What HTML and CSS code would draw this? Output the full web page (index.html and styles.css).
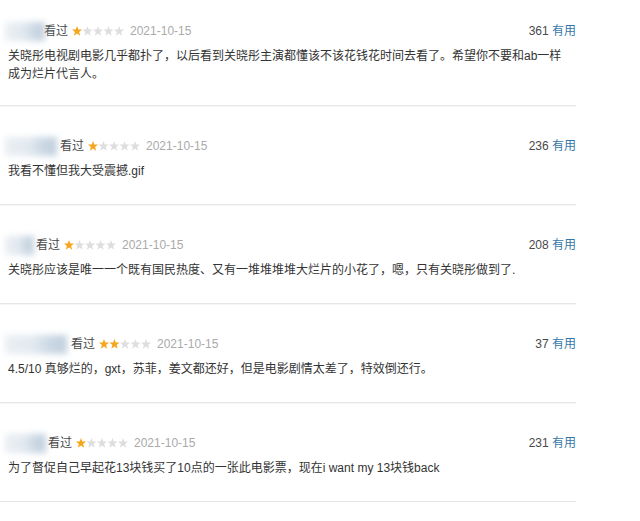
FILE: index.html
```html
<!DOCTYPE html>
<html lang="zh-CN">
<head>
<meta charset="utf-8">
<link rel="stylesheet" href="styles.css">
</head>
<body>
<svg width="0" height="0" class="defs">
  <defs>
    <polygon id="st" points="5,0 6.3,3.5 10,3.6 7.1,5.9 8.2,9.8 5,7.6 1.8,9.8 2.9,5.9 0,3.6 3.7,3.5"/>
  </defs>
</svg>
<div class="list">
  <div class="comment first">
    <div class="head">
      <span class="name n1"></span>
      <span class="watched">看过</span>
      <svg class="stars" viewBox="0 0 52 10" width="52" height="10"><use href="#st" x="0" class="on"/><use href="#st" x="10.5" class="off"/><use href="#st" x="21" class="off"/><use href="#st" x="31.5" class="off"/><use href="#st" x="42" class="off"/></svg>
      <span class="date">2021-10-15</span>
      <span class="votes">361 <a class="useful">有用</a></span>
    </div>
    <p class="text">关晓彤电视剧电影几乎都扑了，以后看到关晓彤主演都懂该不该花钱花时间去看了。希望你不要和ab一样成为烂片代言人。</p>
  </div>
  <div class="comment">
    <div class="head">
      <span class="name n2"></span>
      <span class="watched">看过</span>
      <svg class="stars" viewBox="0 0 52 10" width="52" height="10"><use href="#st" x="0" class="on"/><use href="#st" x="10.5" class="off"/><use href="#st" x="21" class="off"/><use href="#st" x="31.5" class="off"/><use href="#st" x="42" class="off"/></svg>
      <span class="date">2021-10-15</span>
      <span class="votes">236 <a class="useful">有用</a></span>
    </div>
    <p class="text">我看不懂但我大受震撼.gif</p>
  </div>
  <div class="comment">
    <div class="head">
      <span class="name n3"></span>
      <span class="watched">看过</span>
      <svg class="stars" viewBox="0 0 52 10" width="52" height="10"><use href="#st" x="0" class="on"/><use href="#st" x="10.5" class="off"/><use href="#st" x="21" class="off"/><use href="#st" x="31.5" class="off"/><use href="#st" x="42" class="off"/></svg>
      <span class="date">2021-10-15</span>
      <span class="votes">208 <a class="useful">有用</a></span>
    </div>
    <p class="text">关晓彤应该是唯一一个既有国民热度、又有一堆堆堆堆大烂片的小花了，嗯，只有关晓彤做到了.</p>
  </div>
  <div class="comment">
    <div class="head">
      <span class="name n4"></span>
      <span class="watched">看过</span>
      <svg class="stars" viewBox="0 0 52 10" width="52" height="10"><use href="#st" x="0" class="on"/><use href="#st" x="10.5" class="on"/><use href="#st" x="21" class="off"/><use href="#st" x="31.5" class="off"/><use href="#st" x="42" class="off"/></svg>
      <span class="date">2021-10-15</span>
      <span class="votes">37 <a class="useful">有用</a></span>
    </div>
    <p class="text">4.5/10 真够烂的，gxt，苏菲，姜文都还好，但是电影剧情太差了，特效倒还行。</p>
  </div>
  <div class="comment">
    <div class="head">
      <span class="name n5"></span>
      <span class="watched">看过</span>
      <svg class="stars" viewBox="0 0 52 10" width="52" height="10"><use href="#st" x="0" class="on"/><use href="#st" x="10.5" class="off"/><use href="#st" x="21" class="off"/><use href="#st" x="31.5" class="off"/><use href="#st" x="42" class="off"/></svg>
      <span class="date">2021-10-15</span>
      <span class="votes">231 <a class="useful">有用</a></span>
    </div>
    <p class="text">为了督促自己早起花13块钱买了10点的一张此电影票，现在i want my 13块钱back</p>
  </div>
</div>
</body>
</html>
```
FILE: styles.css
```css
html, body {
  margin: 0;
  padding: 0;
  background: #fff;
}
body {
  font-family: "Liberation Sans", "Noto Sans CJK SC", sans-serif;
  font-size: 12px;
  color: #494949;
  overflow: hidden;
}
.defs {
  position: absolute;
  width: 0;
  height: 0;
}
.list {
  width: 576px;
}
.comment {
  padding: 30px 0 24px;
  border-bottom: 1px solid #e6e6e6;
  box-shadow: 0 1px 0 #f6f6f6;
}
.comment.first {
  padding-top: 21px;
  padding-bottom: 22px;
}
.head {
  display: flex;
  align-items: center;
  height: 20px;
  padding-left: 5px;
}
.name {
  display: inline-block;
  height: 19px;
  background: linear-gradient(to right, #e6ebf0 0%, #dce4ec 45%, #bccddd 75%, #b2c3d3 100%);
  filter: blur(3px);
  opacity: 0.8;
}
.n1 { width: 40px; margin-right: -1px; }
.n2 { width: 52px; margin-right: 3px; }
.n3 { width: 29px; margin-right: 2px; }
.n4 { width: 62px; margin-right: 4px; }
.n5 { width: 41px; margin-right: 2px; }
.watched {
  color: #494949;
  line-height: 20px;
}
.stars {
  margin-left: 4px;
  display: block;
}
.stars .on { fill: #f7a51c; }
.stars .off { fill: #dedede; }
.date {
  margin-left: 6px;
  color: #aaa;
  line-height: 20px;
}
.votes {
  margin-left: auto;
  color: #494949;
  line-height: 20px;
}
.useful {
  color: #3377aa;
  cursor: pointer;
}
.text {
  margin: 6px 0 0;
  padding: 0 8px;
  line-height: 18px;
  color: #333;
}
```
